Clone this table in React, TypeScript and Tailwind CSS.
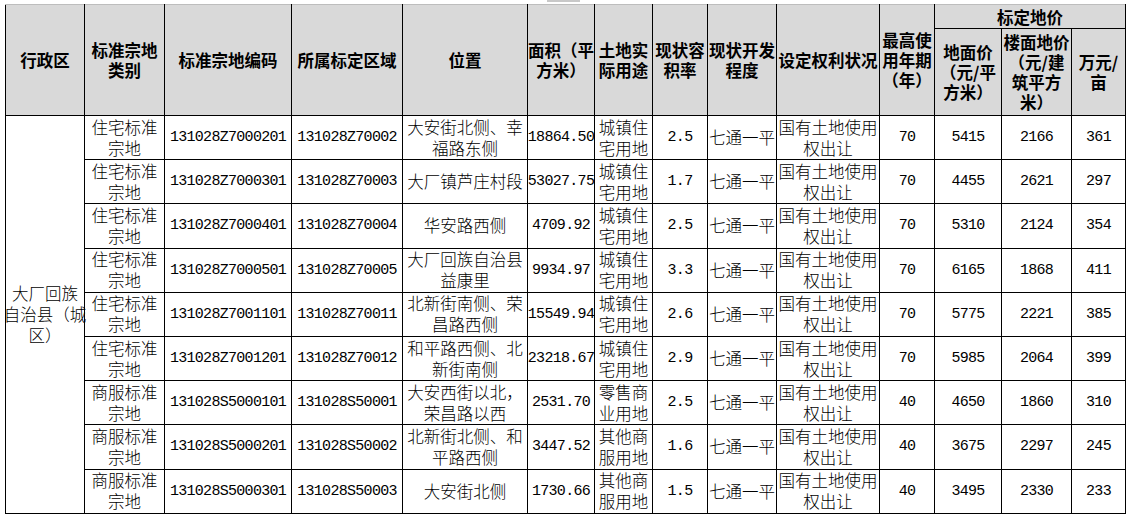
import React from "react";

type Row = {
  type: string[];
  code: string;
  zone: string;
  loc: string[];
  size: string;
  use: string[];
  far: string;
  years: string;
  p1: string;
  p2: string;
  p3: string;
};

const rows: Row[] = [
  { type: ["住宅标准", "宗地"], code: "131028Z7000201", zone: "131028Z70002", loc: ["大安街北侧、幸", "福路东侧"], size: "18864.50", use: ["城镇住", "宅用地"], far: "2.5", years: "70", p1: "5415", p2: "2166", p3: "361" },
  { type: ["住宅标准", "宗地"], code: "131028Z7000301", zone: "131028Z70003", loc: ["大厂镇芦庄村段"], size: "53027.75", use: ["城镇住", "宅用地"], far: "1.7", years: "70", p1: "4455", p2: "2621", p3: "297" },
  { type: ["住宅标准", "宗地"], code: "131028Z7000401", zone: "131028Z70004", loc: ["华安路西侧"], size: "4709.92", use: ["城镇住", "宅用地"], far: "2.5", years: "70", p1: "5310", p2: "2124", p3: "354" },
  { type: ["住宅标准", "宗地"], code: "131028Z7000501", zone: "131028Z70005", loc: ["大厂回族自治县", "益康里"], size: "9934.97", use: ["城镇住", "宅用地"], far: "3.3", years: "70", p1: "6165", p2: "1868", p3: "411" },
  { type: ["住宅标准", "宗地"], code: "131028Z7001101", zone: "131028Z70011", loc: ["北新街南侧、荣", "昌路西侧"], size: "15549.94", use: ["城镇住", "宅用地"], far: "2.6", years: "70", p1: "5775", p2: "2221", p3: "385" },
  { type: ["住宅标准", "宗地"], code: "131028Z7001201", zone: "131028Z70012", loc: ["和平路西侧、北", "新街南侧"], size: "23218.67", use: ["城镇住", "宅用地"], far: "2.9", years: "70", p1: "5985", p2: "2064", p3: "399" },
  { type: ["商服标准", "宗地"], code: "131028S5000101", zone: "131028S50001", loc: ["大安西街以北，", "荣昌路以西"], size: "2531.70", use: ["零售商", "业用地"], far: "2.5", years: "40", p1: "4650", p2: "1860", p3: "310" },
  { type: ["商服标准", "宗地"], code: "131028S5000201", zone: "131028S50002", loc: ["北新街北侧、和", "平路西侧"], size: "3447.52", use: ["其他商", "服用地"], far: "1.6", years: "40", p1: "3675", p2: "2297", p3: "245" },
  { type: ["商服标准", "宗地"], code: "131028S5000301", zone: "131028S50003", loc: ["大安街北侧"], size: "1730.66", use: ["其他商", "服用地"], far: "1.5", years: "40", p1: "3495", p2: "2330", p3: "233" },
];

const th =
  "border border-black border-t-[#bdbdbd] bg-[#d9d9d9] p-0 align-middle text-center font-bold text-[16.5px] leading-[20px] whitespace-nowrap text-black";
const td =
  "border border-black bg-white p-0 align-middle text-center font-light text-[16.5px] leading-[21px] whitespace-nowrap text-black";
const num = "font-['Liberation_Mono','Noto_Sans_CJK_SC',monospace] text-[15px] tracking-[-0.7px] font-normal";

function Lines({ lines, className = "" }: { lines: string[]; className?: string }) {
  return (
    <div className={"flex flex-col items-center " + className}>
      {lines.map((l, i) => (
        <span key={i} className="block whitespace-nowrap">
          {l}
        </span>
      ))}
    </div>
  );
}

function Num({ v }: { v: string }) {
  return (
    <div className="flex justify-center">
      <span className={num + " whitespace-nowrap"}>{v}</span>
    </div>
  );
}

export default function App() {
  return (
    <div className="relative w-[1131px] h-[519px] bg-white overflow-hidden font-['Noto_Sans_CJK_SC',sans-serif]">
      <div className="absolute left-[547px] top-0 w-[33px] h-[2px] bg-[#c8c8c8]" />
      <table className="table-fixed border-collapse w-[1120px] ml-[5px] mt-[4px]">
        <colgroup>
          <col className="w-[79px]" />
          <col className="w-[80px]" />
          <col className="w-[127px]" />
          <col className="w-[111px]" />
          <col className="w-[125px]" />
          <col className="w-[67px]" />
          <col className="w-[58px]" />
          <col className="w-[55px]" />
          <col className="w-[69px]" />
          <col className="w-[103px]" />
          <col className="w-[55px]" />
          <col className="w-[67px]" />
          <col className="w-[70px]" />
          <col className="w-[54px]" />
        </colgroup>
        <thead>
          <tr className="h-[24px]">
            <th rowSpan={2} className={th}>行政区</th>
            <th rowSpan={2} className={th}><Lines lines={["标准宗地", "类别"]} /></th>
            <th rowSpan={2} className={th}>标准宗地编码</th>
            <th rowSpan={2} className={th}>所属标定区域</th>
            <th rowSpan={2} className={th}>位置</th>
            <th rowSpan={2} className={th}><Lines lines={["面积（平", "方米）"]} /></th>
            <th rowSpan={2} className={th}><Lines lines={["土地实", "际用途"]} /></th>
            <th rowSpan={2} className={th}><Lines lines={["现状容", "积率"]} /></th>
            <th rowSpan={2} className={th}><Lines lines={["现状开发", "程度"]} /></th>
            <th rowSpan={2} className={th}>设定权利状况</th>
            <th rowSpan={2} className={th}><Lines lines={["最高使", "用年期", "（年）"]} /></th>
            <th colSpan={3} className={th + " h-[24px]"}>标定地价</th>
          </tr>
          <tr className="h-[87px]">
            <th className={th + " border-t-black"}><Lines lines={["地面价", "（元/平", "方米）"]} /></th>
            <th className={th + " border-t-black"}><Lines lines={["楼面地价", "（元/建", "筑平方", "米）"]} /></th>
            <th className={th + " border-t-black"}><Lines lines={["万元/", "亩"]} /></th>
          </tr>
        </thead>
        <tbody>
          {rows.map((r, i) => (
            <tr key={i} className="h-[44.2px]">
              {i === 0 && (
                <td rowSpan={9} className={td + " leading-[20px]"}>
                  <Lines lines={["大厂回族", "自治县（城", "区）"]} />
                </td>
              )}
              <td className={td}><Lines lines={r.type} /></td>
              <td className={td}><Num v={r.code} /></td>
              <td className={td}><Num v={r.zone} /></td>
              <td className={td}><Lines lines={r.loc} /></td>
              <td className={td}><Num v={r.size} /></td>
              <td className={td}><Lines lines={r.use} /></td>
              <td className={td}><Num v={r.far} /></td>
              <td className={td}>七通一平</td>
              <td className={td}><Lines lines={["国有土地使用", "权出让"]} /></td>
              <td className={td}><Num v={r.years} /></td>
              <td className={td}><Num v={r.p1} /></td>
              <td className={td}><Num v={r.p2} /></td>
              <td className={td}><Num v={r.p3} /></td>
            </tr>
          ))}
        </tbody>
      </table>
    </div>
  );
}
